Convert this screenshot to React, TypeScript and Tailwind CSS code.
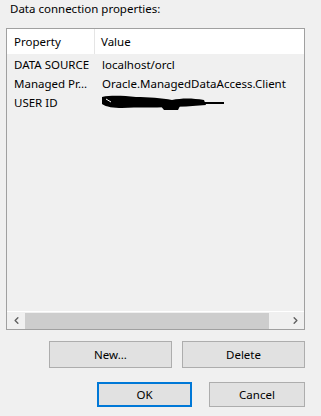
import { ChevronLeft, ChevronRight } from "lucide-react"

const rows = [
  { name: "DATA SOURCE", value: "localhost/orcl" },
  { name: "Managed Pr...", value: "Oracle.ManagedDataAccess.Client" },
  { name: "USER ID", value: "" },
]

function Redacted() {
  return (
    <svg width="124" height="16" viewBox="0 0 124 16" className="mt-[1px]">
      <path d="M0 2 C10 0 22 1 34 2 C46 2 60 3 70 5 C80 3 90 3 102 5 L104 10 C90 11 78 12 66 12 C52 13 36 12 20 13 C12 13 4 12 0 9 Z" fill="#000" />
      <path d="M58 10 L78 11 L76 15 L62 15 Z" fill="#000" />
      <path d="M100 8 L122 8" stroke="#000" strokeWidth="2" fill="none" />
      <path d="M4 4 L9 7" stroke="#fff" strokeWidth="1" />
    </svg>
  )
}

function Btn({ label, primary, w, h }: { label: string; primary?: boolean; w: string; h: string }) {
  return (
    <button
      className={
        primary
          ? `${w} ${h} bg-[#e1e1e1] border-2 border-[#0078d7] text-black`
          : `${w} ${h} bg-[#e1e1e1] border border-[#adadad] text-black`
      }
    >
      {label}
    </button>
  )
}

export default function App() {
  return (
    <div
      className="w-[321px] h-[416px] bg-[#f0f0f0] px-[6px] pt-[1px] text-[11.5px] text-black"
      style={{ fontFamily: '"Noto Sans", "Liberation Sans", sans-serif' }}
    >
      <div className="pl-[4px] h-[27px] leading-[16px]">Data connection properties:</div>

      <div className="w-[299px] h-[302px] border border-[#a0a0a0] flex flex-col">
        <div className="h-[25px] bg-white flex items-center">
          <div className="w-[88px] h-full pl-[7px] flex items-center border-r border-[#e5e5e5]">Property</div>
          <div className="pl-[6px]">Value</div>
        </div>

        <div className="flex-1 pt-[1px]">
          {rows.map((r) => (
            <div key={r.name} className="h-[19px] flex items-center">
              <div className="w-[88px] pl-[7px] whitespace-nowrap overflow-hidden">{r.name}</div>
              <div className="pl-[7px] whitespace-nowrap">{r.value || <Redacted />}</div>
            </div>
          ))}
        </div>

        <div className="h-[18px] border-t border-white flex items-center">
          <div className="w-[18px] flex justify-center">
            <ChevronLeft size={11} strokeWidth={3} color="#606060" />
          </div>
          <div className="w-[244px] h-[16px] bg-[#cdcdcd]" />
          <div className="flex-1 flex justify-end pr-[3px]">
            <ChevronRight size={11} strokeWidth={3} color="#606060" />
          </div>
        </div>
      </div>

      <div className="flex justify-end gap-[10px] mt-[11px] pr-[10px]">
        <Btn label="New..." w="w-[123px]" h="h-[27px]" />
        <Btn label="Delete" w="w-[123px]" h="h-[27px]" />
      </div>

      <div className="flex justify-end gap-[17px] mt-[14px] pr-[10px]">
        <Btn label="OK" primary w="w-[95px]" h="h-[25px]" />
        <Btn label="Cancel" w="w-[96px]" h="h-[25px]" />
      </div>
    </div>
  )
}
